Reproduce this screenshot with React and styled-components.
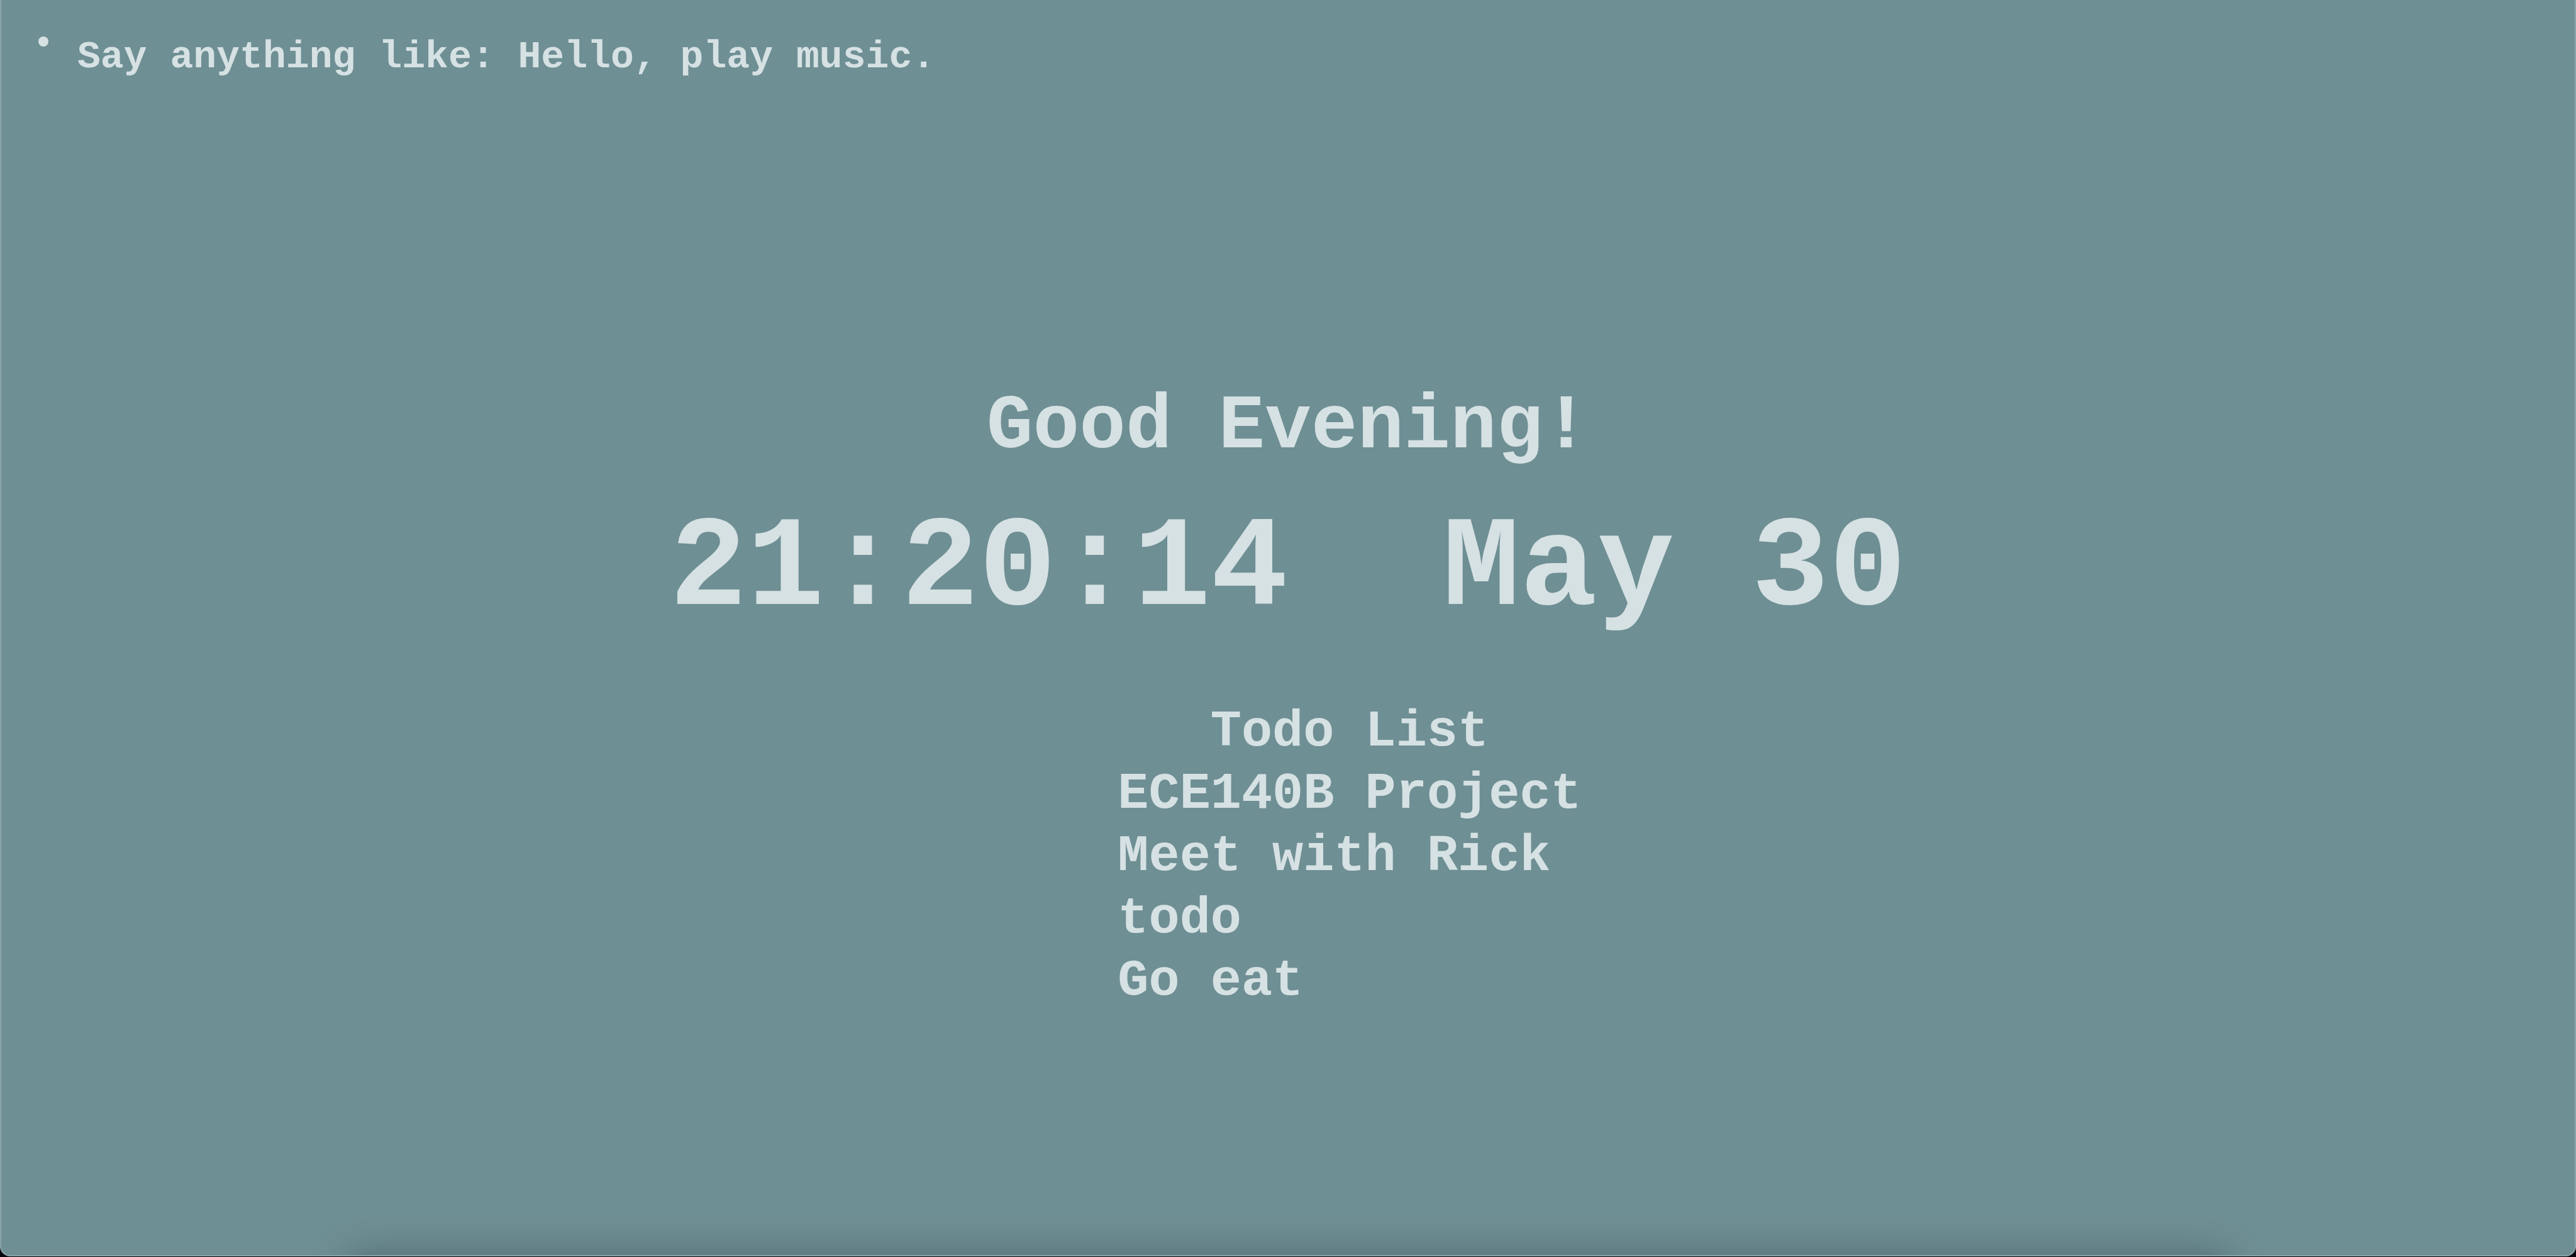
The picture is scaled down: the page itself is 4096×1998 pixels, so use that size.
import React from "react";
import styled, { createGlobalStyle } from "styled-components";

const colors = {
  desktop: "#05070c",
  page: "#6e8f94",
  edge: "#8aa5a9",
  text: "#d6e1e3",
};

const GlobalStyle = createGlobalStyle`
  *, *::before, *::after { box-sizing: border-box; }
  body {
    margin: 0;
    background: ${colors.desktop};
    color: ${colors.text};
    font-family: "Liberation Mono", "Courier New", monospace;
    font-weight: 700;
  }
`;

const Desktop = styled.div`
  display: flex;
  min-height: 100vh;
  padding-bottom: 1px;
`;

const Mirror = styled.div`
  position: relative;
  flex: 1;
  display: flex;
  flex-direction: column;
  gap: 478px;
  overflow: hidden;
  background: ${colors.page};
  border: 2px solid ${colors.edge};
  border-top: 0;
  border-radius: 0 0 16px 16px;
`;

/* Soft shade rising from the dock below the window. */
const DockShade = styled.div`
  position: absolute;
  top: 100%;
  left: 13.5%;
  right: 13.5%;
  height: 100px;
  box-shadow: 0 0 64px rgba(0, 0, 0, 0.26);
`;

const Hints = styled.ul`
  margin: 0;
  padding: 51px 59px 0;
  list-style: none;
`;

const Hint = styled.li`
  display: flex;
  align-items: flex-start;
  gap: 46px;
  font-size: 1.5vw;
  line-height: 80px;

  &::before {
    content: "";
    width: 16px;
    height: 16px;
    margin-top: 7px;
    border-radius: 50%;
    background: currentColor;
  }
`;

const Main = styled.main`
  display: flex;
  flex-direction: column;
  align-items: center;
`;

const Greeting = styled.h2`
  margin: 0 0 41px;
  font-size: 3vw;
  line-height: 140px;
`;

const Clock = styled.h1`
  display: flex;
  gap: 2ch;
  margin: 0 0 92px;
  font-size: 5vw;
  line-height: 232px;
`;

const Todo = styled.section`
  padding-left: 196px;
  font-size: 2vw;
  line-height: 99px;
`;

const TodoTitle = styled.h3`
  margin: 0;
  font-size: inherit;
  text-align: center;
`;

const TodoList = styled.ul`
  margin: 0;
  padding: 0;
  list-style: none;
`;

const todos = ["ECE140B Project", "Meet with Rick", "todo", "Go eat"];

export default function App() {
  return (
    <>
      <GlobalStyle />
      <Desktop>
        <Mirror>
          <Hints>
            <Hint>Say anything like: Hello, play music.</Hint>
          </Hints>
          <Main>
            <Greeting>Good Evening!</Greeting>
            <Clock>
              <time>21:20:14</time>
              <time>May 30</time>
            </Clock>
            <Todo>
              <TodoTitle>Todo List</TodoTitle>
              <TodoList>
                {todos.map((item) => (
                  <li key={item}>{item}</li>
                ))}
              </TodoList>
            </Todo>
          </Main>
          <DockShade />
        </Mirror>
      </Desktop>
    </>
  );
}
